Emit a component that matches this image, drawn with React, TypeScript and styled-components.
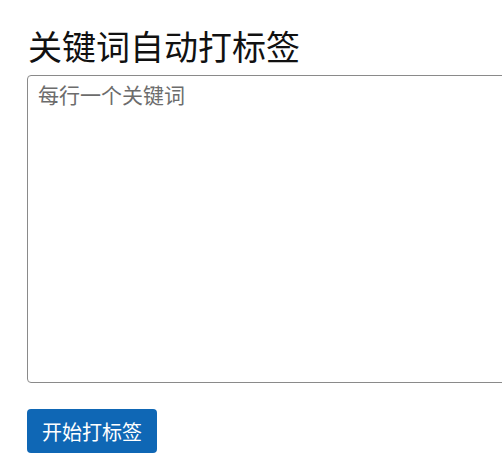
import React from "react";
import styled, { createGlobalStyle } from "styled-components";

const Global = createGlobalStyle`
  html, body { margin: 0; padding: 0; background: #fff; }
  body { font-family: "Noto Sans CJK SC", "Noto Sans", sans-serif; color: #111; overflow: hidden; }
`;

const Page = styled.div`
  padding: 22px 0 0 27px;
  display: flex;
  flex-direction: column;
  align-items: flex-start;
`;

const Title = styled.h1`
  margin: 0 0 5px 1px;
  font-size: 34px;
  font-weight: 400;
  line-height: 48px;
  color: #111;
`;

const Keywords = styled.textarea`
  box-sizing: border-box;
  width: 520px;
  height: 308px;
  margin: 0;
  padding: 4px 10px;
  border: 1px solid #8a8a8a;
  border-radius: 4px;
  font-family: "Noto Sans CJK SC", "Noto Sans", sans-serif;
  font-size: 21px;
  line-height: 28px;
  resize: none;
  &::placeholder { color: #6c6c6c; }
`;

const StartButton = styled.button`
  margin-top: 26px;
  height: 44px;
  padding: 0 15px;
  border: none;
  border-radius: 4px;
  background: #0f67b5;
  color: #fff;
  font-family: "Noto Sans CJK SC", "Noto Sans", sans-serif;
  font-size: 20px;
  cursor: pointer;
`;

export default function App() {
  return (
    <>
      <Global />
      <Page>
        <Title>关键词自动打标签</Title>
        <Keywords placeholder="每行一个关键词" />
        <StartButton>开始打标签</StartButton>
      </Page>
    </>
  );
}
